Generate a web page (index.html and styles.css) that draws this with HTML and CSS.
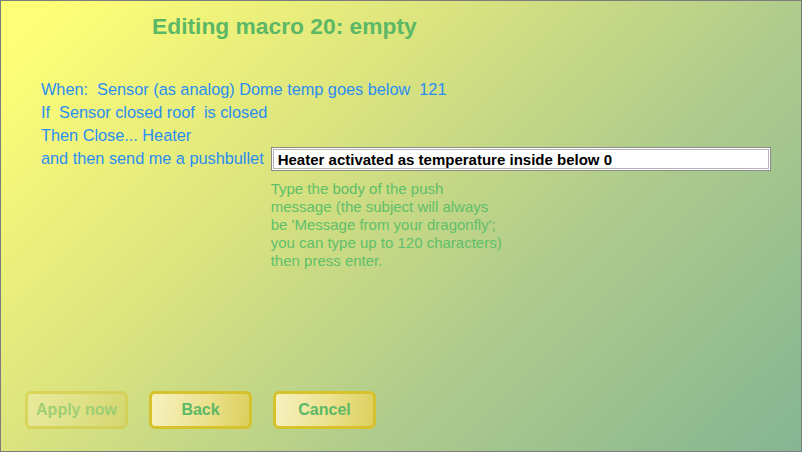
FILE: index.html
```html
<!DOCTYPE html>
<html>
<head>
<meta charset="utf-8">
<link rel="stylesheet" href="styles.css">
</head>
<body>
<div class="panel">
  <h1 class="title">Editing macro 20: empty</h1>
  <div class="rule">
    <div class="line">When:&nbsp; Sensor (as analog) Dome temp goes below&nbsp; 121</div>
    <div class="line">If&nbsp; Sensor closed roof&nbsp; is closed</div>
    <div class="line">Then Close... Heater</div>
    <div class="row">
      <div class="line">and then send me a pushbullet</div>
      <div class="editor">
        <div class="field">
          <input class="input" type="text" value="Heater activated as temperature inside below 0">
        </div>
        <p class="hint">Type the body of the push message (the subject will always be 'Message from your dragonfly'; you can type up to 120 characters) then press enter.</p>
      </div>
    </div>
  </div>
  <div class="buttons">
    <button class="btn disabled">Apply now</button>
    <button class="btn">Back</button>
    <button class="btn">Cancel</button>
  </div>
</div>
</body>
</html>
```

FILE: styles.css
```css
* { box-sizing: border-box; }
html, body { margin: 0; padding: 0; }
body {
  width: 802px;
  height: 452px;
  overflow: hidden;
  font-family: "Liberation Sans", Arial, sans-serif;
}
.panel {
  width: 802px;
  height: 452px;
  border: 1px solid #7c7c7c;
  background: linear-gradient(135deg, #ffff77 4%, #dce47e 35%, #b0cc8c 64%, #85b592 100%);
  display: flex;
  flex-direction: column;
  padding: 12px 0 22px 40px;
}
.title {
  margin: 0 0 39px 111px;
  font-size: 22.8px;
  line-height: 26px;
  font-weight: bold;
  color: #5cb865;
}
.rule {
  color: #2a8ef2;
  font-size: 16.3px;
}
.line {
  line-height: 23px;
  white-space: nowrap;
}
.row {
  display: flex;
  align-items: flex-start;
  gap: 7px;
}
.editor {
  display: flex;
  flex-direction: column;
}
.field {
  width: 500px;
  height: 24px;
  border: 1px solid #8c8c8c;
  padding: 1px;
  background: #fff;
}
.input {
  display: block;
  width: 100%;
  height: 100%;
  border: 1px solid #b4b4b4;
  padding: 0 0 0 4px;
  margin: 0;
  font-family: "Liberation Sans", Arial, sans-serif;
  font-size: 15px;
  font-weight: bold;
  color: #000;
  background: #fff;
  outline: none;
}
.hint {
  margin: 9px 0 0 0;
  width: 236px;
  font-size: 15px;
  line-height: 18px;
  color: #5fbf6a;
}
.buttons {
  margin-top: auto;
  margin-left: -16px;
  display: flex;
  gap: 21px;
}
.btn {
  width: 103px;
  height: 38px;
  border: 3px solid #d5c22c;
  border-radius: 6px;
  background: linear-gradient(100deg, #f6f1c0 0%, #ebe18e 55%, #dccf5c 100%);
  color: #5cb865;
  font-family: "Liberation Sans", Arial, sans-serif;
  font-size: 16px;
  font-weight: bold;
  padding: 0;
}
.btn.disabled {
  opacity: 0.45;
}
```
